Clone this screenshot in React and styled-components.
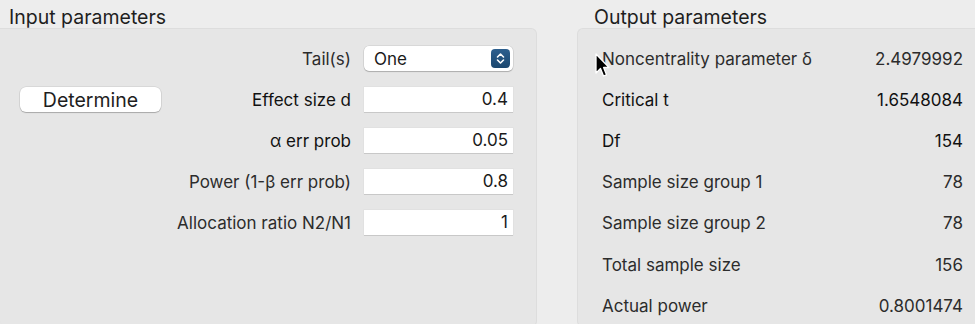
import React from 'react';
import styled, { createGlobalStyle } from 'styled-components';

const GlobalStyle = createGlobalStyle`
  html, body {
    margin: 0;
    padding: 0;
    background: #ededed;
    overflow: hidden;
  }
  body {
    font-family: Inter, "Liberation Sans", sans-serif;
    color: #222;
    -webkit-font-smoothing: antialiased;
  }
`;

const StyledWrapper = styled.div`
  position: relative;
  display: grid;
  grid-template-columns: 537px 1fr;
  column-gap: 40px;
  width: 980px;
  height: 324px;
  overflow: hidden;
`;

const StyledColumn = styled.div`
  display: flex;
  flex-direction: column;
`;

const StyledTitle = styled.h2`
  margin: 0;
  height: 28px;
  padding-left: ${({ indent }) => indent}px;
  font-size: 19.5px;
  font-weight: 400;
  line-height: 34px;
  color: #1e1e1e;
`;

const StyledPanel = styled.div`
  flex: 1;
  background: #e6e6e6;
  border: 1px solid #dddddd;
  border-radius: 6px;
  ${({ flushLeft }) => flushLeft && 'border-left: none; border-top-left-radius: 0;'}
  ${({ flushRight }) => flushRight && 'border-right: none;'}
`;

const StyledInputGrid = styled.div`
  display: grid;
  grid-template-columns: 141px 1fr 149px;
  grid-auto-rows: 41px;
  column-gap: 13px;
  align-items: center;
  padding: 9px 23px 0 20px;
`;

const StyledLabel = styled.div`
  grid-column: 2;
  text-align: right;
  font-size: 17px;
  white-space: nowrap;
  color: ${({ strong }) => (strong ? '#111' : '#2c2c2c')};
`;

const StyledField = styled.div`
  grid-column: 3;
  height: 25px;
  box-sizing: border-box;
  background: #fff;
  box-shadow: 0 1px 0 #c8c8c8, 0 0 0 0.5px #dcdcdc;
  font-size: 17px;
  line-height: 25px;
  text-align: right;
  padding-right: 5px;
  color: #1a1a1a;
`;

const StyledSelect = styled.div`
  grid-column: 3;
  height: 25px;
  display: flex;
  align-items: center;
  justify-content: space-between;
  padding: 0 3px 0 10px;
  background: #fff;
  border-radius: 5px;
  box-shadow: 0 1px 1px rgba(0, 0, 0, 0.2), 0 0 0 0.5px rgba(0, 0, 0, 0.12);
  font-size: 17px;
  color: #1a1a1a;
`;

const StyledStepper = styled.span`
  display: flex;
  align-items: center;
  justify-content: center;
  width: 19px;
  height: 19px;
  border-radius: 4px;
  background: linear-gradient(#2d5f8e, #1b476f);
`;

const StyledButton = styled.button`
  grid-column: 1;
  grid-row: 2;
  height: 25px;
  margin: 0;
  padding: 0;
  border: none;
  border-radius: 6px;
  background: #fff;
  box-shadow: 0 1px 1px rgba(0, 0, 0, 0.22), 0 0 0 0.5px rgba(0, 0, 0, 0.12);
  font-family: inherit;
  font-size: 19.5px;
  color: #1e1e1e;
`;

const StyledOutputList = styled.div`
  display: grid;
  grid-auto-rows: 41.2px;
  align-items: center;
  padding: 9px 17px 0 24px;
`;

const StyledOutputRow = styled.div`
  display: flex;
  justify-content: space-between;
  font-size: 17px;
  color: ${({ strong }) => (strong ? '#111' : '#2c2c2c')};
`;

const StyledCursor = styled.svg`
  position: absolute;
  left: 594px;
  top: 53px;
`;

const inputs = [
  { label: 'Effect size d', value: '0.4', strong: true },
  { label: 'α err prob', value: '0.05', strong: true },
  { label: 'Power (1-β err prob)', value: '0.8' },
  { label: 'Allocation ratio N2/N1', value: '1' },
];

const outputs = [
  { label: 'Noncentrality parameter δ', value: '2.4979992' },
  { label: 'Critical t', value: '1.6548084', strong: true },
  { label: 'Df', value: '154', strong: true },
  { label: 'Sample size group 1', value: '78' },
  { label: 'Sample size group 2', value: '78' },
  { label: 'Total sample size', value: '156' },
  { label: 'Actual power', value: '0.8001474' },
];

const App = () => (
  <>
    <GlobalStyle />
    <StyledWrapper>
      <StyledColumn>
        <StyledTitle indent={9}>Input parameters</StyledTitle>
        <StyledPanel flushLeft>
          <StyledInputGrid>
            <StyledLabel>Tail(s)</StyledLabel>
            <StyledSelect>
              <span>One</span>
              <StyledStepper>
                <svg width="11" height="13" viewBox="0 0 11 13" fill="none">
                  <path d="M2.5 5 L5.5 2 L8.5 5" stroke="#fff" strokeWidth="1.6" strokeLinecap="round" strokeLinejoin="round" />
                  <path d="M2.5 8 L5.5 11 L8.5 8" stroke="#fff" strokeWidth="1.6" strokeLinecap="round" strokeLinejoin="round" />
                </svg>
              </StyledStepper>
            </StyledSelect>
            <StyledButton>Determine</StyledButton>
            {inputs.map(({ label, value, strong }) => (
              <React.Fragment key={label}>
                <StyledLabel strong={strong}>{label}</StyledLabel>
                <StyledField>{value}</StyledField>
              </React.Fragment>
            ))}
          </StyledInputGrid>
        </StyledPanel>
      </StyledColumn>
      <StyledColumn>
        <StyledTitle indent={17}>Output parameters</StyledTitle>
        <StyledPanel flushRight>
          <StyledOutputList>
            {outputs.map(({ label, value, strong }) => (
              <StyledOutputRow key={label} strong={strong}>
                <span>{label}</span>
                <span>{value}</span>
              </StyledOutputRow>
            ))}
          </StyledOutputList>
        </StyledPanel>
      </StyledColumn>
      <StyledCursor width="16" height="26" viewBox="0 0 16 26">
        <path
          d="M2 1 L2 20 L6.5 15.5 L9.5 23 L12.5 21.8 L9.6 14.5 L15 14.5 Z"
          fill="#000"
          stroke="#fff"
          strokeWidth="1.3"
          strokeLinejoin="round"
        />
      </StyledCursor>
    </StyledWrapper>
  </>
);

export default App;
